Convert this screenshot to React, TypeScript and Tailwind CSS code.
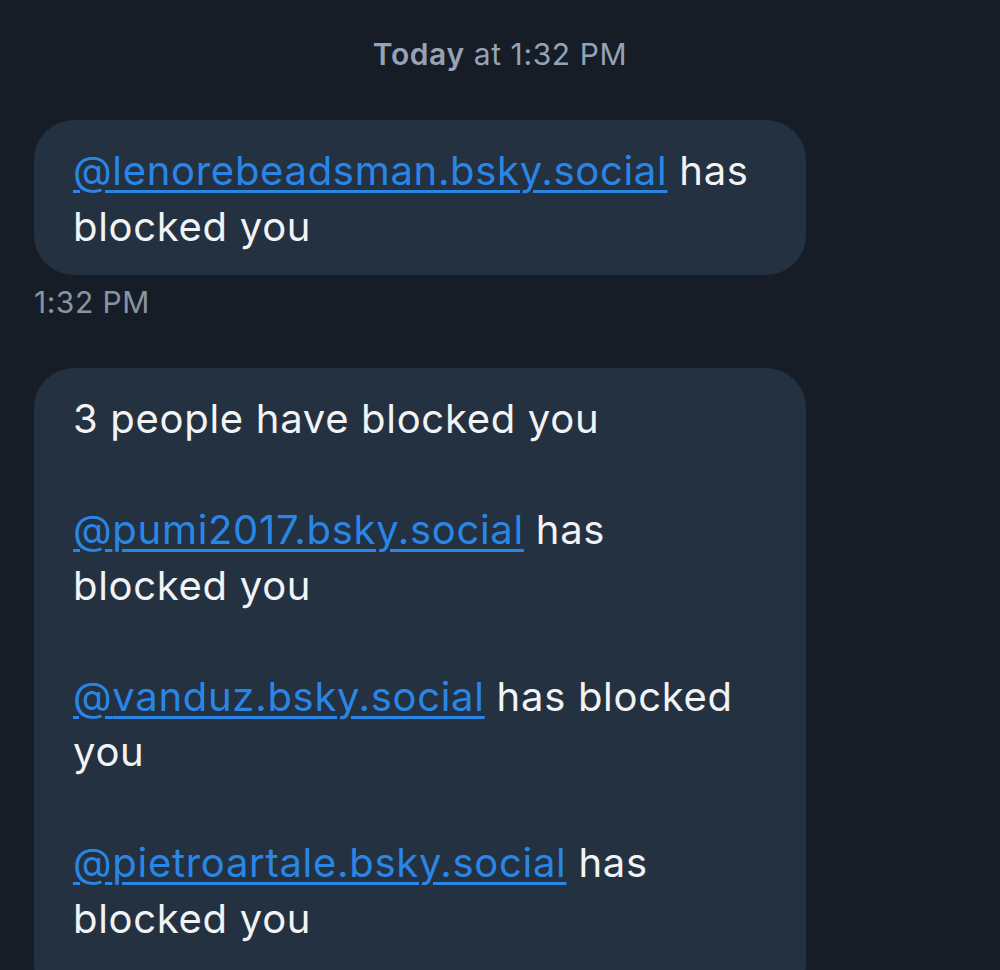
function Handle({ name }: { name: string }) {
  return (
    <a href="#" className="text-[#2a86e6] underline decoration-[2.5px] underline-offset-[5px]">
      @{name}
    </a>
  )
}

export default function App() {
  return (
    <div className="min-h-[970px] w-[1000px] overflow-hidden bg-[#171d26] font-['Inter',sans-serif]">
      <div className="pt-[34px] text-center text-[30px] leading-[40px] tracking-[0.6px] text-[#95a3b4]">
        <span className="font-semibold">Today</span> at 1:32 PM
      </div>

      <div className="mt-[46px] px-[34px]">
        <div className="w-[772px] rounded-[40px] bg-[#243140] px-[39px] pt-[23px] pb-[20px] text-[40px] leading-[56px] tracking-[0.7px] text-[#f1f3f5]">
          <Handle name="lenorebeadsman.bsky.social" /> has blocked you
        </div>
        <div className="mt-[9px] text-[30px] leading-[36px] tracking-[0.5px] text-[#8794a4]">1:32 PM</div>

        <div className="mt-[48px] w-[772px] rounded-[40px] bg-[#243140] px-[39px] pt-[23px] pb-[60px] text-[40px] leading-[55.5px] tracking-[0.7px] text-[#f1f3f5]">
          <p>3 people have blocked you</p>
          <p className="mt-[55.5px]">
            <Handle name="pumi2017.bsky.social" /> has blocked you
          </p>
          <p className="mt-[55.5px]">
            <Handle name="vanduz.bsky.social" /> has blocked you
          </p>
          <p className="mt-[55.5px]">
            <Handle name="pietroartale.bsky.social" /> has blocked you
          </p>
        </div>
      </div>
    </div>
  )
}
